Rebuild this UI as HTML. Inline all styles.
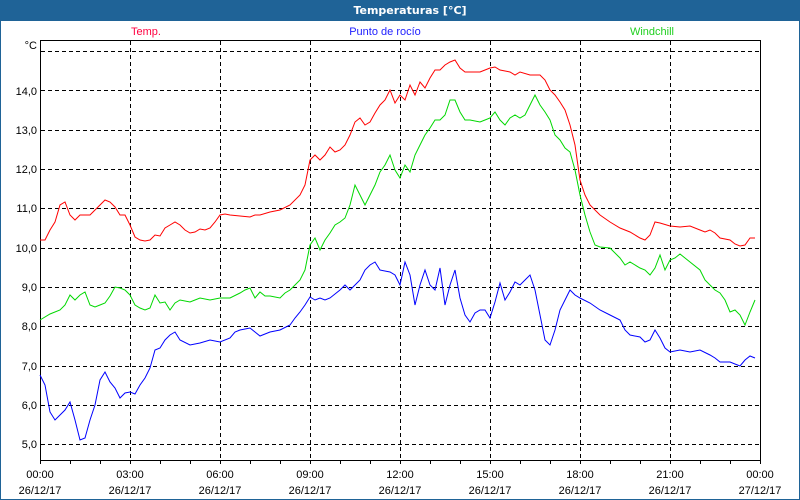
<!DOCTYPE html>
<html><head><meta charset="utf-8"><style>
html,body{margin:0;padding:0;background:#fff;}
svg{display:block;font-family:"Liberation Sans",Tahoma,sans-serif;font-size:11px;}
</style></head><body>
<svg width="800" height="500" xmlns="http://www.w3.org/2000/svg">
<rect x="0" y="0" width="800" height="500" fill="#fff"/>
<rect x="0" y="0" width="800" height="21" fill="#1f6397"/>
<rect x="0" y="0" width="1" height="500" fill="#1f6397"/>
<rect x="799" y="0" width="1" height="500" fill="#1f6397"/>
<rect x="0" y="499" width="800" height="1" fill="#1f6397"/>
<text x="410" y="14" fill="#fff" font-weight="bold" font-family="DejaVu Sans, sans-serif" font-size="11" text-anchor="middle">Temperaturas [°C]</text>
<text x="146" y="35" fill="#ff0040" text-anchor="middle">Temp.</text>
<text x="385" y="35" fill="#2020ff" text-anchor="middle">Punto de rocío</text>
<text x="652" y="35" fill="#20d020" text-anchor="middle">Windchill</text>
<g stroke="#000" stroke-width="1" stroke-dasharray="4,3" fill="none">
<path d="M41 51.5H759M41 90.5H759M41 130.5H759M41 169.5H759M41 208.5H759M41 248.5H759M41 287.5H759M41 326.5H759M41 366.5H759M41 405.5H759M41 444.5H759"/>
<path d="M130.5 41V459M220.5 41V459M310.5 41V459M400.5 41V459M490.5 41V459M580.5 41V459M670.5 41V459"/>
</g>
<path d="M40.5 40.5H760.5V460.5H40.5Z" stroke="#000" fill="none"/>
<g stroke="#000"><path d="M40.5 460V464M70.5 460V464M100.5 460V464M130.5 460V464M160.5 460V464M190.5 460V464M220.5 460V464M250.5 460V464M280.5 460V464M310.5 460V464M340.5 460V464M370.5 460V464M400.5 460V464M430.5 460V464M460.5 460V464M490.5 460V464M520.5 460V464M550.5 460V464M580.5 460V464M610.5 460V464M640.5 460V464M670.5 460V464M700.5 460V464M730.5 460V464M760.5 460V464"/></g>
<g text-anchor="end" fill="#000">
<text x="37" y="49">°C</text>
<text x="37" y="95">14,0</text><text x="37" y="134">13,0</text><text x="37" y="173">12,0</text><text x="37" y="212">11,0</text><text x="37" y="252">10,0</text><text x="37" y="291">9,0</text><text x="37" y="330">8,0</text><text x="37" y="370">7,0</text><text x="37" y="409">6,0</text><text x="37" y="448">5,0</text>
</g>
<g text-anchor="middle" fill="#000">
<text x="40" y="478">00:00</text><text x="130" y="478">03:00</text><text x="220" y="478">06:00</text><text x="310" y="478">09:00</text><text x="400" y="478">12:00</text><text x="490" y="478">15:00</text><text x="580" y="478">18:00</text><text x="670" y="478">21:00</text><text x="760" y="478">00:00</text>
<text x="40" y="494">26/12/17</text><text x="130" y="494">26/12/17</text><text x="220" y="494">26/12/17</text><text x="310" y="494">26/12/17</text><text x="400" y="494">26/12/17</text><text x="490" y="494">26/12/17</text><text x="580" y="494">26/12/17</text><text x="670" y="494">26/12/17</text><text x="760" y="494">27/12/17</text>
</g>
<polyline fill="none" stroke="#00d800" points="40,320 50,314 60,310 65,305 70,295 75,300 80,295 85,292 90,305 95,307 100,305 105,303 110,296 115,287 120,288 125,290 130,295 135,305 140,308 145,310 150,308 155,295 160,303 165,302 170,310 175,303 180,300 190,302 195,300 200,298 210,300 220,298 230,298 240,293 245,290 250,288 255,298 260,292 265,296 270,296 280,298 285,293 290,290 295,285 300,280 305,270 310,245 315,238 320,250 325,240 330,233 335,225 340,222 345,218 350,205 355,185 360,195 365,205 370,195 375,185 380,172 385,165 390,155 395,170 400,178 405,165 410,172 415,155 420,145 425,135 430,128 435,120 440,120 445,115 450,100 455,100 460,112 465,120 470,120 480,122 485,120 490,118 495,112 500,120 505,125 510,118 515,115 520,118 525,115 530,105 535,95 540,105 545,112 550,120 555,135 560,140 565,148 570,152 575,170 580,195 585,215 590,232 595,245 600,247 610,248 620,258 625,265 630,262 640,268 645,270 650,275 655,268 660,255 665,270 670,260 675,258 680,254 690,262 700,270 705,280 710,285 715,290 720,293 725,300 730,312 735,310 740,315 745,325 750,312 755,300"/>
<polyline fill="none" stroke="#0000ff" points="40,375 45,385 50,412 55,420 60,415 65,410 70,402 75,420 80,440 85,438 90,420 95,405 100,380 105,372 110,382 115,388 120,398 125,393 130,392 135,394 140,385 145,378 150,368 155,350 160,348 165,340 170,335 175,332 180,340 190,345 200,343 210,340 220,342 230,338 235,332 240,330 250,328 255,332 260,336 270,332 280,330 290,325 295,318 300,312 305,305 310,297 315,300 320,298 325,300 330,298 340,290 345,285 350,290 355,285 360,280 365,270 370,265 375,262 380,270 390,272 395,275 400,285 405,262 410,275 415,305 420,285 425,270 430,285 435,290 440,268 445,305 450,285 455,270 460,298 465,315 470,322 475,313 480,310 485,310 490,318 495,302 500,283 505,300 510,292 515,282 520,285 525,280 530,275 535,290 540,315 545,340 550,345 555,330 560,310 565,300 570,290 575,295 580,298 590,303 600,310 610,315 620,320 625,330 630,335 640,337 645,342 650,340 655,330 660,338 665,348 670,352 680,350 690,352 700,350 710,355 715,358 720,362 730,362 740,366 745,360 750,356 755,358"/>
<polyline fill="none" stroke="#ff0000" points="40,240 45,240 50,230 55,222 60,205 65,202 70,215 75,220 80,215 90,215 95,210 100,205 105,200 110,202 115,207 120,215 125,215 130,225 135,237 140,240 145,241 150,240 155,235 160,236 165,228 170,225 175,222 180,225 185,230 190,233 195,232 200,229 205,230 210,228 215,222 220,215 225,214 230,215 240,216 250,217 255,215 260,215 270,212 280,210 290,205 300,195 305,185 310,160 315,155 320,160 325,155 330,147 335,152 340,150 345,145 350,135 355,122 360,118 365,125 370,122 375,113 380,105 385,100 390,90 395,103 400,95 405,100 410,85 415,95 420,82 425,88 430,78 435,70 440,70 445,65 450,62 455,60 460,68 465,72 470,72 480,72 485,70 490,68 495,67 500,70 510,72 515,75 520,72 530,75 540,75 545,80 550,90 555,95 560,102 565,110 570,125 575,145 580,180 585,195 590,205 600,215 610,222 620,228 630,232 640,238 645,240 650,235 655,222 660,223 670,226 680,227 690,226 700,230 705,232 710,230 715,233 720,238 730,240 735,244 740,246 745,245 750,238 755,238"/>
</svg>
</body></html>
